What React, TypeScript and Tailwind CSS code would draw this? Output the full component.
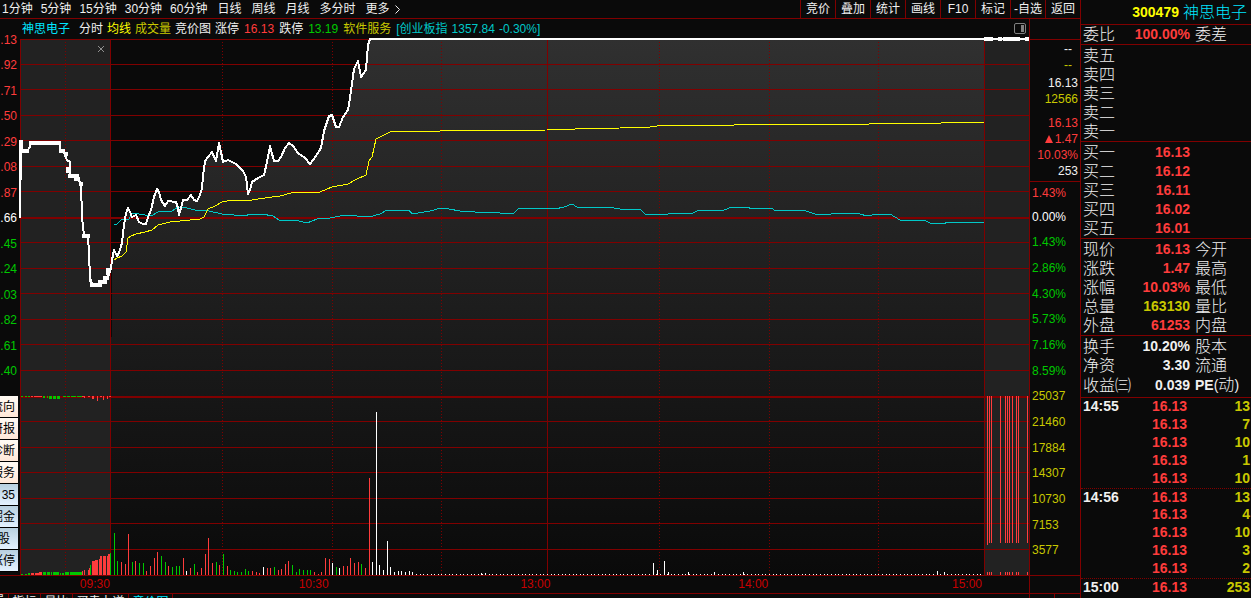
import { useState } from "react";

type Bar = [number, number, string];

const R = "#ff3c3c";
const G = "#00c800";
const W = "#ffffff";

const minutePeriods = ["1分钟", "5分钟", "15分钟", "30分钟", "60分钟"];
const longPeriods = ["日线", "周线", "月线", "多分时"];
const tools = ["竞价", "叠加", "统计", "画线", "F10", "标记", "-自选", "返回"];

const priceLabels = [
  ".13",
  ".92",
  ".71",
  ".50",
  ".29",
  ".08",
  ".87",
  ".66",
  ".45",
  ".24",
  ".03",
  ".82",
  ".61",
  ".40",
];
const sideTabs = ["流向", "研报", "诊断", "服务", "35", "掘金", "股", "涨停"];

const percentLabels = [
  "0.00%",
  "1.43%",
  "2.86%",
  "4.30%",
  "5.73%",
  "7.16%",
  "8.59%",
];
const volumeLabels = ["25037", "21460", "17884", "14307", "10730", "7153", "3577"];

const sells = ["卖五", "卖四", "卖三", "卖二", "卖一"];
const buys = [
  ["买一", "16.13"],
  ["买二", "16.12"],
  ["买三", "16.11"],
  ["买四", "16.02"],
  ["买五", "16.01"],
];
const quotes = [
  { label: "现价", value: "16.13", color: "text-[#ff3c3c]", other: "今开" },
  { label: "涨跌", value: "1.47", color: "text-[#ff3c3c]", other: "最高" },
  { label: "涨幅", value: "10.03%", color: "text-[#ff3c3c]", other: "最低" },
  { label: "总量", value: "163130", color: "text-[#c8c800]", other: "量比" },
  { label: "外盘", value: "61253", color: "text-[#ff3c3c]", other: "内盘" },
];
const basics = [
  { label: "换手", value: "10.20%", other: "股本" },
  { label: "净资", value: "3.30", other: "流通" },
  { label: "收益㈢", value: "0.039", other: "PE(动)" },
];
const ticks = [
  ["14:55", "13"],
  ["", "7"],
  ["", "10"],
  ["", "1"],
  ["", "10"],
  ["14:56", "13"],
  ["", "4"],
  ["", "10"],
  ["", "3"],
  ["", "2"],
  ["15:00", "253"],
];

// chart geometry
const gridRows = [
  39, 64, 89, 115, 140, 166, 191, 242, 268, 293, 319, 344, 370, 421, 447, 472,
  498, 523, 549,
];
const gridDots = [65, 222, 332, 441, 659, 769, 878];

const auction =
  "20,140 20,217 21,146 23,151 27,151 30,147 31,142 60,142 60,150 64,153 67,160 70,162 70,175 76,176 78,180 81,183 82,217 84,236 88,236 89,253 90,278 92,284 98,285 103,281 108,277 111,268 112,260";
const price =
  "112,260 114,250 117,256 119,253 122,243 124,225 126,213 128,208 130,212 132,217 136,215 139,222 143,224 146,224 148,217 151,210 154,197 157,189 159,192 161,200 165,206 168,201 176,202 178,208 179,215 182,204 183,200 187,200 191,195 194,200 197,201 200,195 202,188 203,176 205,161 208,157 212,152 216,161 219,143 221,152 223,162 228,160 236,164 243,171 246,177 248,194 250,190 252,182 258,178 264,175 267,162 270,146 274,161 278,161 281,157 285,148 289,143 293,146 298,153 305,158 310,164 316,156 321,148 324,131 329,116 332,115 336,127 339,127 343,117 348,110 350,98 354,69 358,61 361,77 366,70 368,45 370,39 984,39";
const average =
  "114,260 117,258 122,256 126,252 128,238 131,236 136,234 145,232 152,230 158,225 170,222 180,221 200,219 204,217 208,209 215,206 222,202 233,200 252,200 265,198 280,196 291,193 320,192 332,187 348,184 357,179 366,175 369,161 372,157 376,139 382,136 390,132 403,131 440,131 547,130 575,129 620,128 650,127 665,125 734,125 738,124 869,124 870,123 941,123 942,122 984,122";
const index =
  "114,224 117,224 121,220 129,219 132,213 139,214 151,216 158,212 165,211 172,211 178,207 187,208 195,210 209,211 222,214 245,216 250,214 262,214 273,216 279,220 295,220 307,223 317,219 330,218 345,215 369,217 380,214 387,210 409,210 412,214 430,211 441,208 449,209 460,211 475,212 500,213 503,214 514,213 518,209 530,208 555,209 564,207 572,204 577,207 600,208 607,207 620,209 641,210 645,214 655,215 668,214 693,213 699,210 724,210 732,207 748,207 751,209 771,208 776,211 803,210 815,214 825,215 838,213 860,214 867,216 878,214 890,214 900,220 926,221 930,223 944,224 947,222 984,222";

const bars: Bar[] = [
  [114, 42, G], [117, 14, G], [121, 13, R], [125, 11, R], [128, 41, R],
  [132, 13, G], [135, 14, R], [139, 12, G], [143, 12, G], [146, 4, R],
  [150, 9, R], [154, 17, R], [157, 23, R], [161, 19, G], [165, 13, G],
  [168, 9, R], [172, 8, G], [176, 9, G], [179, 9, G], [183, 17, R],
  [186, 4, W], [190, 7, R], [194, 11, G], [197, 3, R], [201, 7, R],
  [205, 21, R], [208, 37, R], [212, 12, R], [216, 13, G], [219, 10, R],
  [223, 21, G], [227, 9, R], [230, 5, G], [234, 4, G], [237, 3, G],
  [241, 3, G], [245, 6, G], [248, 4, G], [252, 4, R], [256, 3, R],
  [259, 2, R], [263, 8, W], [267, 7, R], [270, 7, R], [274, 8, G],
  [278, 5, R], [281, 6, R], [285, 11, R], [288, 14, R], [292, 10, G],
  [296, 3, G], [299, 6, G], [303, 5, G], [307, 5, G], [310, 5, G],
  [314, 3, R], [318, 1, R], [321, 3, R], [325, 17, R], [329, 16, R],
  [332, 12, W], [336, 8, G], [339, 7, W], [343, 9, R], [347, 9, R],
  [350, 17, R], [354, 12, R], [358, 13, R], [361, 11, G], [365, 7, R],
  [369, 97, R], [372, 13, W], [376, 163, W], [379, 10, W], [383, 5, W],
  [387, 34, W], [390, 8, W], [394, 3, W], [398, 4, W], [401, 4, W],
  [405, 3, W], [409, 4, W], [412, 3, W], [481, 2, W], [485, 2, W],
  [653, 12, W], [657, 5, W], [664, 14, W], [668, 3, W], [688, 3, W],
  [714, 3, W], [743, 3, W], [937, 4, W], [944, 3, W],
];
// quiet trades while the price is at its limit
const quiet = Array.from({ length: 156 }, (_, i) => 416 + Math.round(i * 3.64));

// x, width, height, colour of the opening auction volume
const auctionBars: [number, number, number, string][] = [
  [21, 2, 1, G], [25, 2, 1, G], [28, 2, 2, G], [31, 3, 2, R], [35, 4, 2, R],
  [39, 3, 3, R], [43, 3, 3, G], [47, 3, 3, G], [51, 1, 3, G], [53, 6, 3, G],
  [60, 1, 2, G], [62, 2, 2, G], [65, 4, 3, G], [70, 12, 3, G], [82, 1, 4, R],
  [84, 1, 5, R], [88, 1, 5, R], [89, 1, 7, R], [90, 1, 10, G], [92, 3, 14, R],
  [95, 1, 15, R], [96, 2, 15, R], [99, 1, 16, R], [100, 2, 19, R],
  [103, 3, 19, R], [107, 1, 19, R], [108, 2, 21, R], [110, 1, 22, G],
];
const unmatched: [number, number, number, string][] = [
  [21, 2, 1, G], [25, 2, 1, G], [28, 2, 1, G], [31, 2, 1, R], [34, 5, 1, R],
  [39, 3, 1, R], [43, 2, 2, G], [47, 1, 2, G], [49, 3, 3, G], [53, 3, 3, G],
  [57, 3, 3, G], [63, 3, 1, G], [67, 3, 1, G], [71, 5, 1, G], [77, 5, 1, G],
  [82, 2, 1, R], [84, 1, 2, R], [88, 2, 1, R], [92, 2, 3, R], [97, 1, 5, R],
  [100, 2, 1, R], [103, 1, 4, R], [107, 1, 3, R], [109, 2, 1, R],
];
const closing = [987, 989, 991, 1000, 1005, 1007, 1009, 1012, 1016, 1018, 1027];

const Chart = () => (
  <svg
    viewBox="20 38 1009 537"
    preserveAspectRatio="none"
    shapeRendering="crispEdges"
    className="block h-full w-full overflow-visible"
    role="img"
    aria-label="分时走势"
  >
    <defs>
      <linearGradient
        id="fade"
        gradientUnits="userSpaceOnUse"
        x1="0"
        y1="39"
        x2="0"
        y2="575"
      >
        <stop offset="0" stopColor="#303030" />
        <stop offset="1" stopColor="#0a0a0a" />
      </linearGradient>
    </defs>
    <polygon points={`110,575 ${price} 984,575`} fill="url(#fade)" />
    <rect x="20" y="39" width="90" height="536" fill="#222222" />
    <rect x="984" y="39" width="45" height="536" fill="#222222" />
    <g fill="#800000">
      {gridRows.map((y) => (
        <rect key={y} x="20" y={y} width="1009" height="1" />
      ))}
      <rect x="20" y="217" width="1009" height="2" />
      <rect x="20" y="396" width="1009" height="2" />
      <rect x="20" y="39" width="1" height="536" />
      <rect x="110" y="39" width="1" height="536" />
      <rect x="984" y="39" width="1" height="536" />
      <rect x="547" y="39" width="1" height="536" />
    </g>
    <g stroke="#800000" strokeDasharray="1 2">
      {gridDots.map((x) => (
        <line key={x} x1={x + 0.5} x2={x + 0.5} y1="42" y2="575" />
      ))}
    </g>

    {unmatched.map(([x, w, h, fill]) => (
      <rect key={x} x={x} y="396" width={w} height={h} fill={fill} />
    ))}
    {auctionBars.map(([x, w, h, fill]) => (
      <rect key={x} x={x} y={575 - h} width={w} height={h} fill={fill} />
    ))}
    {quiet.map((x) => (
      <rect key={x} x={x} y="574" width="1" height="1" fill={W} />
    ))}
    {bars.map(([x, h, fill]) => (
      <rect key={x} x={x} y={575 - h} width="1" height={h} fill={fill} />
    ))}
    <g fill={R}>
      {closing.map((x, i) => (
        <g key={x}>
          <rect x={x} y="396" width="1" height={i === 0 ? 149 : 147} />
          <rect x={x} y="572" width="1" height="3" />
        </g>
      ))}
    </g>

    <g fill="none" strokeLinejoin="round">
      <polyline points={index} stroke="#00c8c8" />
      <polyline points={average} stroke="#ffff00" />
      <polyline points={price} stroke={W} strokeWidth="2" />
      <polyline points={auction} stroke={W} strokeWidth="2" />
      <g stroke={W} strokeWidth="4">
        <path d="M21 140V147M22 151H29M29 143H61M59 151H65M64 154H68M68 167V173M68 176H79M74 179H80M79 184H83M82 236H90M89 280H91M90 285H102M98 282H107M103 278H109M108 275V268" />
        <path d="M984 39H993M998 39H1002M1003 39H1020M1025 39H1029" />
      </g>
      <path d="M984 39H1029" stroke={W} strokeWidth="2" />
    </g>
  </svg>
);

const SidePanel = () => (
  <aside className="w-[171px] shrink-0 border-l border-[#800000] text-[16px] leading-[19px]">
    <h1 className="flex h-[25px] items-center justify-end gap-1 border-b border-[#800000] pr-1">
      <span className="text-[14px] font-bold text-[#ffff00]">300479</span>
      <span className="font-light text-[#00e6ff]">神思电子</span>
    </h1>
    <table className="w-full table-fixed border-b border-[#800000]">
      <tbody>
        <tr className="h-[19px]">
          <th className="w-[50px] pl-0.5 text-left font-light">委比</th>
          <td className="w-[60px] pr-px text-right text-[14px] font-bold text-[#ff3c3c]">
            100.00%
          </td>
          <th className="pl-1 text-left font-light">委差</th>
        </tr>
      </tbody>
    </table>
    <ul className="border-b border-[#800000] pt-px">
      {sells.map((label) => (
        <li key={label} className="h-[19px] pl-0.5 font-light">
          {label}
        </li>
      ))}
    </ul>
    <div className="border-b border-[#800000] pt-px">
      <table className="w-full table-fixed">
        <tbody>
          {buys.map(([label, value]) => (
            <tr key={label} className="h-[19px]">
              <th className="w-[50px] pl-0.5 text-left font-light">{label}</th>
              <td className="w-[60px] pr-px text-right text-[14px] font-bold text-[#ff3c3c]">
                {value}
              </td>
              <td></td>
            </tr>
          ))}
        </tbody>
      </table>
    </div>
    <div className="border-b border-[#800000] pt-px">
      <table className="w-full table-fixed">
        <tbody>
          {quotes.map((q) => (
            <tr key={q.label} className="h-[19px]">
              <th className="w-[50px] pl-0.5 text-left font-light">{q.label}</th>
              <td
                className={`w-[60px] pr-px text-right text-[14px] font-bold ${q.color}`}
              >
                {q.value}
              </td>
              <th className="pl-1 text-left font-light">{q.other}</th>
            </tr>
          ))}
        </tbody>
      </table>
    </div>
    <div className="border-b border-[#800000] pt-px pb-0.5">
      <table className="w-full table-fixed">
        <tbody>
          {basics.map((b) => (
            <tr key={b.label} className="h-[19px]">
              <th className="w-[50px] pl-0.5 text-left font-light whitespace-nowrap">
                {b.label}
              </th>
              <td className="w-[60px] pr-px text-right text-[14px] font-bold">
                {b.value}
              </td>
              <th className="pl-1 text-left font-light whitespace-nowrap">
                {b.other === "PE(动)" ? (
                  <>
                    <span className="text-[14px] font-bold">PE</span>
                    <span className="text-[14px]">(</span>动
                    <span className="text-[14px]">)</span>
                  </>
                ) : (
                  b.other
                )}
              </th>
            </tr>
          ))}
        </tbody>
      </table>
    </div>
    <table className="w-full table-fixed border-collapse text-[14px] leading-[16px] font-bold">
      <tbody>
        {ticks.map(([time, volume], i) => (
          <tr
            key={i}
            className={
              time && i > 0
                ? "h-[18px] border-t border-dotted border-[#800000] align-top"
                : "h-[18px] align-top"
            }
          >
            <td className="w-[50px] p-0 pl-0.5">{time}</td>
            <td className="w-[56px] p-0 text-right text-[#ff3c3c]">16.13</td>
            <td className="p-0 pr-px text-right text-[#c8c800]">{volume}</td>
          </tr>
        ))}
      </tbody>
    </table>
  </aside>
);

const App = () => {
  const [showAuction, setShowAuction] = useState(true);

  return (
    <div className="flex h-screen overflow-hidden bg-[#0a0a0a] font-['Liberation_Sans','Noto_Sans_CJK_SC',sans-serif] text-[12px] leading-[16px] text-[#f0f0f0]">
      <div className="flex min-w-0 flex-1 flex-col">
        <nav className="flex h-[19px] shrink-0 justify-between border-b border-[#800000] whitespace-nowrap">
          <div className="flex gap-[10px] pl-0.5">
            <div className="flex gap-2">
              {minutePeriods.map((p) => (
                <button key={p}>{p}</button>
              ))}
            </div>
            {longPeriods.map((p) => (
              <button key={p}>{p}</button>
            ))}
            <button className="flex items-center">
              更多
              <svg
                viewBox="0 0 9 9"
                className="ml-1 size-[9px]"
                fill="none"
                stroke="currentColor"
              >
                <path d="M1.5 0.5 5.5 4.5 1.5 8.5" />
              </svg>
            </button>
          </div>
          <div className="flex">
            {tools.map((t) => (
              <button key={t} className="w-[35px] border-l border-[#800000]">
                {t}
              </button>
            ))}
          </div>
        </nav>

        <div className="flex min-h-0 flex-1">
          <div className="flex min-w-0 flex-1 flex-col">
            <header className="flex h-[19px] shrink-0 items-center justify-between pr-[3px] pl-[22px] whitespace-nowrap">
              <div className="flex items-center gap-1">
                <span className="mr-[5px] text-[#00e6ff]">神思电子</span>
                <span>分时</span>
                <span className="text-[#ffff00]">均线</span>
                <span className="text-[#c8c800]">成交量</span>
                <span>竞价图</span>
                <span>涨停</span>
                <span className="px-px text-[#ff3c3c]">16.13</span>
                <span>跌停</span>
                <span className="px-px text-[#00c800]">13.19</span>
                <span className="text-[#c8c800]">软件服务</span>
                <span className="flex gap-1 pl-px text-[#00c8c8]">
                  <span>[创业板指</span>
                  <span>1357.84</span>
                  <span>-0.30%]</span>
                </span>
              </div>
              <button aria-label="侧栏">
                <svg viewBox="0 0 12 11" className="h-[11px] w-3">
                  <rect
                    x="0.5"
                    y="0.5"
                    width="11"
                    height="10"
                    rx="1.5"
                    fill="none"
                    stroke="#808080"
                  />
                  <rect x="7" y="2" width="3" height="7" fill="#808080" />
                </svg>
              </button>
            </header>

            <div className="flex min-h-0 flex-1">
              <div className="flex w-5 shrink-0 flex-col overflow-x-clip">
                <ul className="-mt-[11px] flex flex-[357] flex-col pr-[3px]">
                  {priceLabels.map((label, i) => (
                    <li
                      key={label}
                      className={`flex flex-1 items-center justify-end ${
                        i < 7
                          ? "text-[#ff3c3c]"
                          : i === 7
                            ? "text-white"
                            : "text-[#00c800]"
                      }`}
                    >
                      {label}
                    </li>
                  ))}
                </ul>
                <div className="mt-3 mb-[3px] flex flex-[176] flex-col text-black">
                  {sideTabs.map((tab, i) => (
                    <button
                      key={tab}
                      className={`mr-0.5 flex flex-1 items-center justify-end overflow-hidden border-b border-black bg-linear-to-b whitespace-nowrap ${
                        i < 4
                          ? "from-[#fffaf4] to-[#ffe8d8]"
                          : "from-[#b8d0e0] to-[#e4f2ff]"
                      } ${tab === "股" ? "pr-2" : "pr-[3px]"}`}
                    >
                      {tab}
                    </button>
                  ))}
                </div>
              </div>
              <div className="relative min-w-0 flex-1">
                <Chart />
                {showAuction && (
                  <button
                    className="absolute top-[7px] left-[77px]"
                    aria-label="关闭竞价"
                    onClick={() => setShowAuction(false)}
                  >
                    <svg viewBox="0 0 8 8" className="size-2" stroke="#909090">
                      <path d="M1 1 7 7M7 1 1 7" />
                    </svg>
                  </button>
                )}
              </div>
            </div>

            <div className="grid h-[18px] shrink-0 grid-cols-[110fr_219fr_222fr_218fr_214fr_46fr] border-t border-[#800000] pr-px text-right text-[#c80000]">
              <time>09:30</time>
              <time>10:30</time>
              <time>13:00</time>
              <time>14:00</time>
              <time>15:00</time>
            </div>
            <div className="flex h-[5px] shrink-0 overflow-hidden border-t border-[#800000] leading-[14px] whitespace-nowrap">
              <button className="flex h-4 w-[9px] justify-end border-r border-[#800000] pr-1">
                置
              </button>
              <button className="h-4 w-8 border-r border-[#800000]">指标</button>
              <button className="h-4 w-8 border-r border-[#800000]">量比</button>
              <button className="h-4 w-14 border-r border-[#800000]">买卖力道</button>
              <button className="h-4 w-11 border-r border-[#800000] text-[#00e6ff]">
                竞价图
              </button>
            </div>
          </div>

          <div className="flex w-[51px] shrink-0 flex-col border-l border-[#800000]">
            <div className="h-[21px] shrink-0 border-b border-[#800000]"></div>
            <div className="h-[142px] shrink-0 border-b border-[#800000] pt-px pr-0.5 text-right">
              <p className="pr-1.5">--</p>
              <p className="pr-1.5 text-[#c8c800]">--</p>
              <p className="mt-0.5">16.13</p>
              <p className="text-[#c8c800]">12566</p>
              <div className="mt-2 text-[#ff3c3c]">
                <p>16.13</p>
                <p className="flex items-center justify-end gap-0.5">
                  <svg viewBox="0 0 8 8" className="size-2" fill="currentColor">
                    <path d="M4 0 8 8H0z" />
                  </svg>
                  1.47
                </p>
                <p>10.03%</p>
              </div>
              <p>253</p>
            </div>
            <ul className="flex min-h-0 flex-1 flex-col pb-3 pl-0.5">
              <li className="flex h-[22px] shrink-0 items-center text-[#ff3c3c]">
                1.43%
              </li>
              {percentLabels.map((label, i) => (
                <li
                  key={label}
                  className={`flex flex-1 items-center ${
                    i === 0 ? "text-white" : "text-[#00c800]"
                  }`}
                >
                  {label}
                </li>
              ))}
              {volumeLabels.map((label) => (
                <li key={label} className="flex flex-1 items-center text-[#c8c800]">
                  {label}
                </li>
              ))}
            </ul>
            <div className="h-[18px] shrink-0 border-t border-[#800000]"></div>
            <div className="h-[5px] shrink-0 border-t border-[#800000]">
              <div className="h-full w-[25px] border-r border-[#800000]"></div>
            </div>
          </div>
        </div>
      </div>
      <SidePanel />
    </div>
  );
};

export default App;
